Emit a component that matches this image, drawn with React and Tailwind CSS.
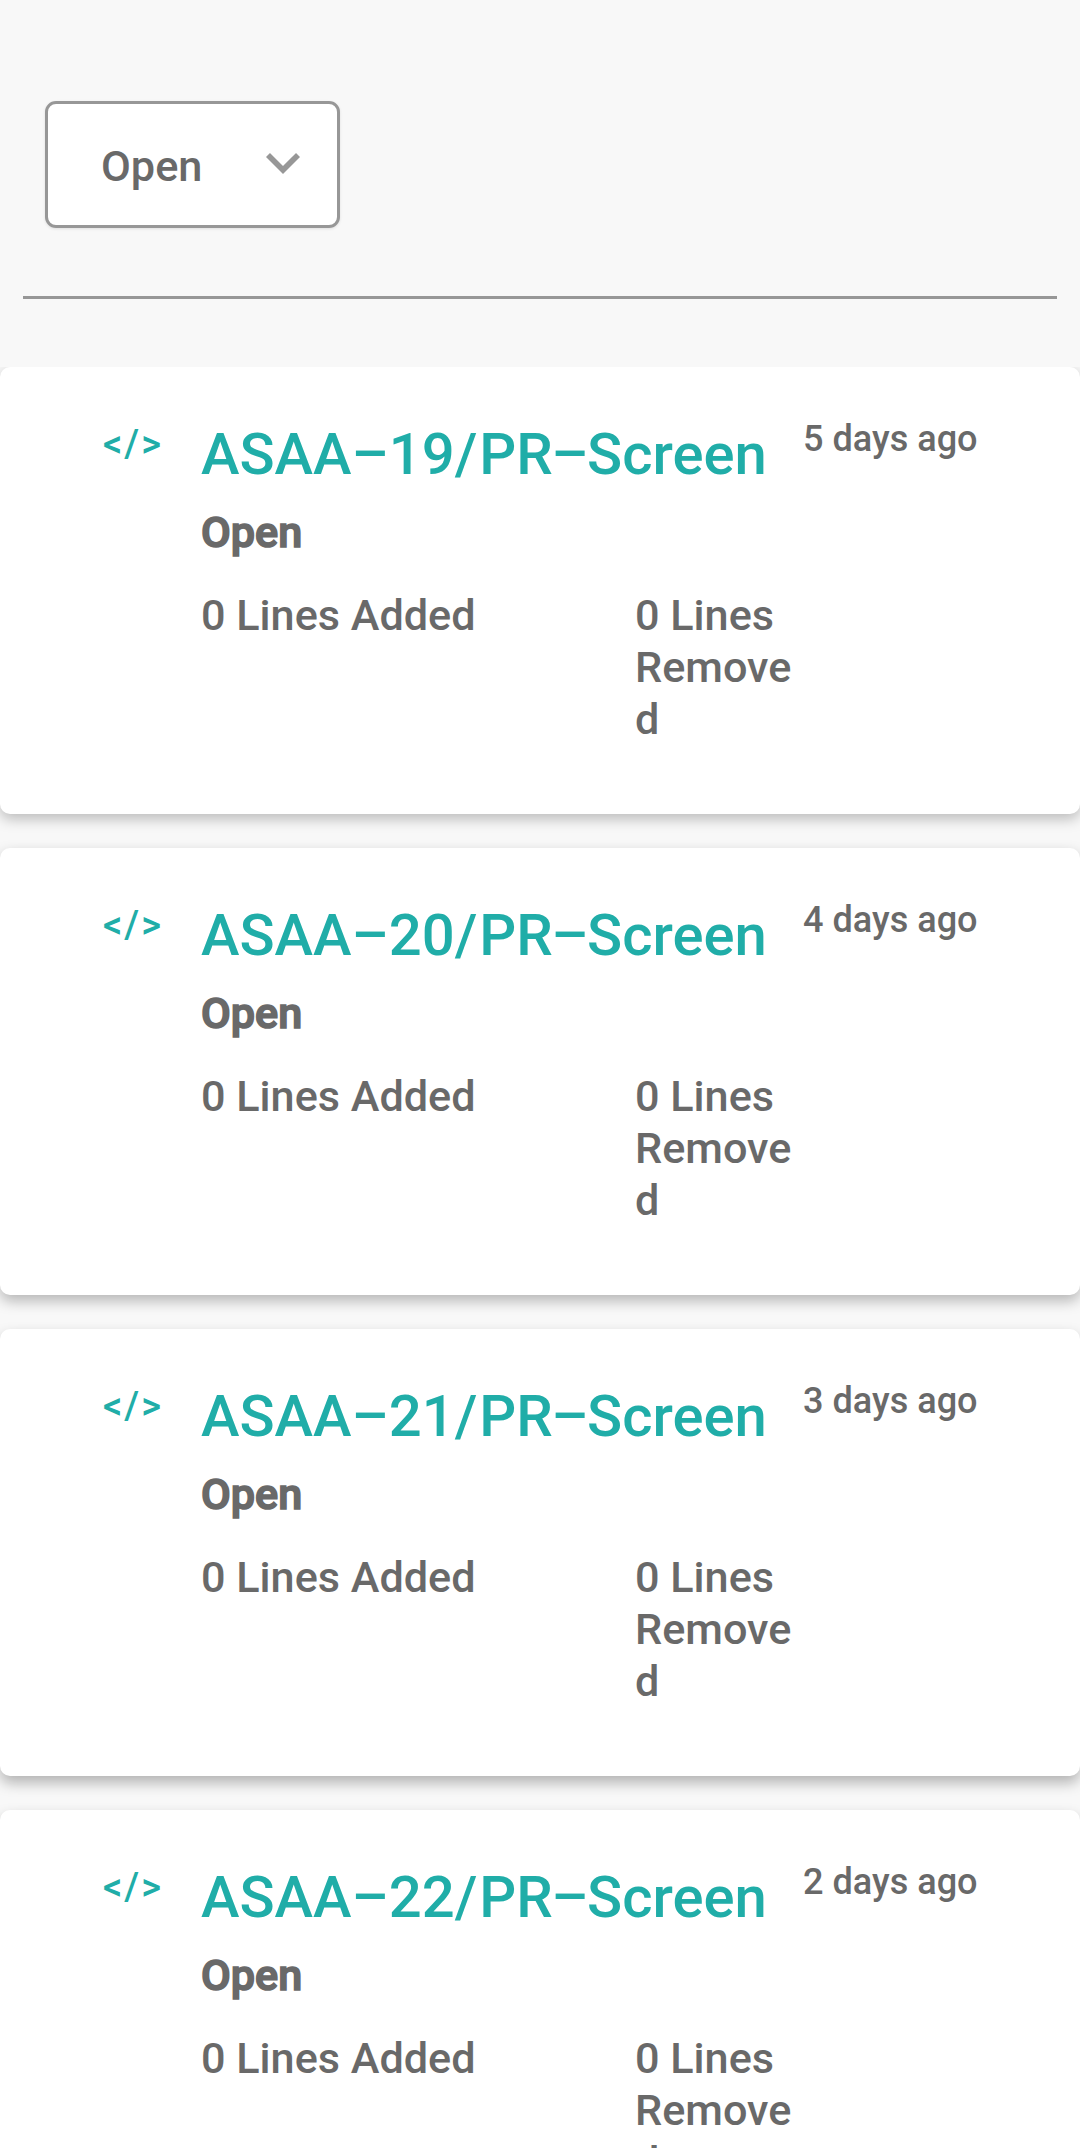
const items = [
  { n: 19, days: 5, shadow: "shadow-[0_5px_14px_rgba(0,0,0,0.25)]" },
  { n: 20, days: 4, shadow: "shadow-[0_6px_14px_rgba(0,0,0,0.27)]" },
  { n: 21, days: 3, shadow: "shadow-[0_7px_14px_rgba(0,0,0,0.28)]" },
  { n: 22, days: 2, shadow: "shadow-[0_7px_14px_rgba(0,0,0,0.28)]" },
];

function Card({ n, days, shadow }) {
  return (
    <article className={`flex h-[447px] w-full shrink-0 items-start rounded-[10px] bg-white pt-[51px] ${shadow}`}>
      <div className="ml-[103px] w-[98px] whitespace-nowrap pt-[6px] text-[38px] leading-[40px] tracking-[2px] text-[#20ada8]">&lt;/&gt;</div>
      <div className="w-[602px] pt-[2px]">
        <h2 className="whitespace-nowrap text-[58px] leading-[68px] text-[#20ada8]">
          ASAA–{n}<span className="tracking-[2px]">/</span>P<span className="tracking-[-1.5px]">R–</span>Screen
        </h2>
        <p className="mt-[19px] text-[43.2px] leading-[52px] [-webkit-text-stroke:1.6px_#696969]">Open</p>
        <div className="mt-[31px] flex text-[43.2px] leading-[52px]">
          <p className="w-[434px]">0 Lines Added</p>
          <p className="w-[160px] break-all">0 Lines<br />Removed</p>
        </div>
      </div>
      <time className="whitespace-nowrap text-[36.1px] leading-[42px]">{days} days ago</time>
    </article>
  );
}

export default function App() {
  return (
    <main className="h-[2148px] w-[1080px] overflow-hidden bg-[#f8f8f8] font-['Roboto',sans-serif] font-medium text-[#696969]">
      <header className="flex h-[367px] flex-col px-[23px] pt-[101px]">
        <button className="ml-[22px] flex h-[127px] w-[295px] items-center justify-between rounded-[11px] border-[3px] border-[#979797] bg-white pl-[53px] pr-[37px] text-[43.3px] shadow-[0_1px_3px_rgba(0,0,0,0.1)]">
          <span className="pt-[6px]">Open</span>
          <svg className="mb-[2px] h-[21px] w-[34px]" viewBox="6 8.59 12 7.41" fill="#979797">
            <path d="M16.59 8.59 12 13.17 7.41 8.59 6 10l6 6 6-6z" />
          </svg>
        </button>
        <hr className="mt-[68px] border-0 border-t-[3px] border-[#979797]" />
      </header>
      <section className="flex h-[1781px] flex-col gap-[34px] overflow-hidden">
        {items.map((item) => <Card key={item.n} {...item} />)}
      </section>
    </main>
  );
}
